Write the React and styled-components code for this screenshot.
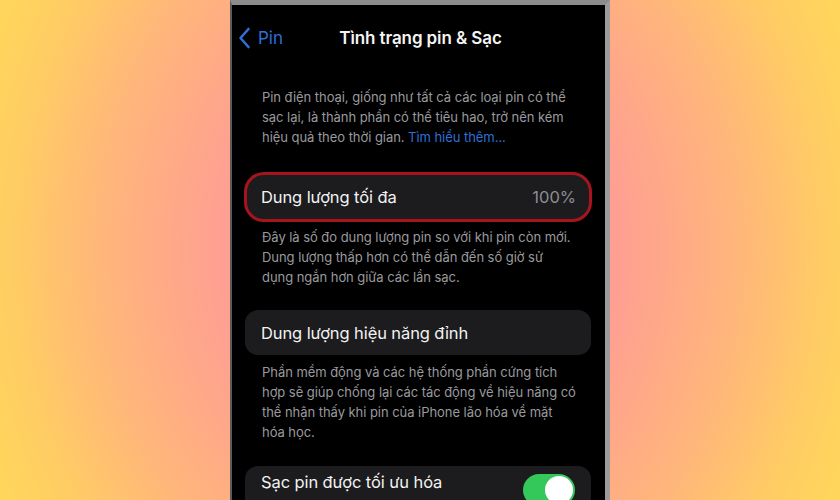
import React from "react";
import styled, { createGlobalStyle } from "styled-components";

const Global = createGlobalStyle`
  html, body { margin: 0; padding: 0; }
  body { font-family: Inter, "Noto Sans", sans-serif; }
`;

const Page = styled.div`
  width: 840px;
  height: 500px;
  overflow: hidden;
  display: flex;
  justify-content: center;
  background: radial-gradient(ellipse 470px 560px at 420px 250px, #ff969f 0%, #ff9d94 40%, #ffb67a 68%, #ffcc64 86%, #ffd75a 100%);
`;

const Phone = styled.div`
  width: 380px;
  height: 500px;
  box-sizing: border-box;
  border-top: 5px solid #8d8b8c;
  border-left: 2px solid #5c5b5c;
  border-right: 5px solid #9c9a9b;
  background: #000;
  overflow: hidden;
  display: flex;
  flex-direction: column;
`;

const NavBar = styled.div`
  height: 75px;
  flex-shrink: 0;
  position: relative;
  display: flex;
  align-items: flex-start;
  justify-content: center;
  padding-top: 22px;
  box-sizing: border-box;
`;

const Back = styled.div`
  position: absolute;
  left: 6px;
  top: 22px;
  display: flex;
  align-items: center;
  gap: 7px;
  color: #2f6fd8;
  font-size: 17px;
  line-height: 22px;
`;

const Title = styled.div`
  color: #f4f4f4;
  font-size: 17px;
  line-height: 22px;
  font-weight: 600;
  letter-spacing: -0.1px;
  margin-left: 4px;
`;

const Content = styled.div`
  padding: 7px 14px 0 13px;
  display: flex;
  flex-direction: column;
`;

const Footnote = styled.p`
  margin: ${(p) => p.$mt || 0}px 0 ${(p) => p.$mb || 0}px;
  padding: 0 14px 0 17px;
  color: #9a9a9e;
  font-size: 13px;
  line-height: 20px;
  letter-spacing: -0.05px;
`;

const Link = styled.span`
  color: #2f6fd8;
`;

const Card = styled.div`
  height: ${(p) => p.$h || 45}px;
  flex-shrink: 0;
  box-sizing: border-box;
  background: #1c1c1e;
  border-radius: ${(p) => (p.$hl ? 20 : 13)}px;
  border: ${(p) => (p.$hl ? "3px solid #a8141d" : "none")};
  padding: ${(p) => (p.$top ? 6 : 0)}px ${(p) => (p.$hl ? 13 : 16)}px 0 ${(p) => (p.$hl ? 14 : 16)}px;
  display: flex;
  align-items: ${(p) => (p.$top ? "flex-start" : "center")};
  justify-content: space-between;
  margin: 0 ${(p) => (p.$hl ? -1 : 0)}px;
`;

const Label = styled.span`
  color: #f2f2f2;
  font-size: 16.5px;
  letter-spacing: -0.1px;
  margin-top: ${(p) => p.$mt || 0}px;
`;

const Value = styled.span`
  color: #8e8e93;
  font-size: 16.5px;
`;

const Toggle = styled.div`
  width: 52px;
  height: 32px;
  margin-top: 2px;
  border-radius: 16px;
  background: #34c759;
  position: relative;
  flex-shrink: 0;
  &::after {
    content: "";
    position: absolute;
    right: 2px;
    top: 2px;
    width: 28px;
    height: 28px;
    border-radius: 50%;
    background: #fff;
  }
`;

export default function App() {
  return (
    <>
      <Global />
      <Page>
        <Phone>
          <NavBar>
            <Back>
              <svg width="13" height="22" viewBox="0 0 13 22">
                <path d="M10.5 2 L2.5 11 L10.5 20" fill="none" stroke="#2f6fd8" strokeWidth="2.6" strokeLinecap="round" strokeLinejoin="round" />
              </svg>
              Pin
            </Back>
            <Title>Tình trạng pin &amp; Sạc</Title>
          </NavBar>
          <Content>
            <Footnote $mb={25}>
              Pin điện thoại, giống như tất cả các loại pin có thể sạc lại, là thành phần có thể tiêu hao, trở nên kém hiệu quả theo thời gian. <Link>Tìm hiểu thêm...</Link>
            </Footnote>
            <Card $hl $h={50}>
              <Label>Dung lượng tối đa</Label>
              <Value>100%</Value>
            </Card>
            <Footnote $mt={5} $mb={23}>
              Đây là số đo dung lượng pin so với khi pin còn mới. Dung lượng thấp hơn có thể dẫn đến số giờ sử dụng ngắn hơn giữa các lần sạc.
            </Footnote>
            <Card $h={45}>
              <Label>Dung lượng hiệu năng đỉnh</Label>
            </Card>
            <Footnote $mt={7} $mb={24}>
              Phần mềm động và các hệ thống phần cứng tích hợp sẽ giúp chống lại các tác động về hiệu năng có thể nhận thấy khi pin của iPhone lão hóa về mặt hóa học.
            </Footnote>
            <Card $h={50} $top>
              <Label $mt={0}>Sạc pin được tối ưu hóa</Label>
              <Toggle />
            </Card>
          </Content>
        </Phone>
      </Page>
    </>
  );
}
